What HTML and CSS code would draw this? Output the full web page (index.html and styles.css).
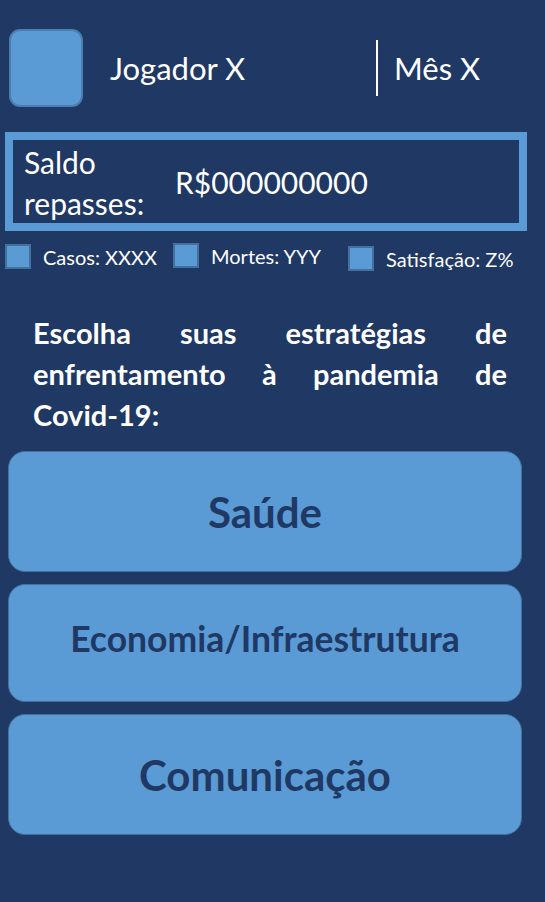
FILE: index.html
```html
<!DOCTYPE html>
<html lang="pt-BR">
<head>
    <meta charset="UTF-8">
    <meta name="viewport" content="width=device-width, initial-scale=1.0">
    <title>Jogo Covid-19</title>
    <link rel="stylesheet" href="styles.css">
</head>
<body>

<div class="screen">
    <div class="top">
        <div class="avatar"></div>
        <div class="player">Jogador X</div>
        <div class="divider"></div>
        <div class="month">Mês X</div>
    </div>

    <div class="balance">
        <div class="balance-label">Saldo<br>repasses:</div>
        <div class="balance-value">R$000000000</div>
    </div>

    <div class="stats">
        <div class="stat stat-casos"><span class="stat-box"></span>Casos: XXXX</div>
        <div class="stat stat-mortes"><span class="stat-box"></span>Mortes: YYY</div>
        <div class="stat stat-satisf"><span class="stat-box"></span>Satisfação: Z%</div>
    </div>

    <h1 class="question">Escolha suas estratégias de<br>enfrentamento à pandemia de<br>Covid-19:</h1>

    <div class="options">
        <button class="option">Saúde</button>
        <button class="option option-mid">Economia/Infraestrutura</button>
        <button class="option">Comunicação</button>
    </div>
</div>

</body>
</html>
```

FILE: styles.css
```css
body {
    margin: 0;
    background: #203864;
    color: #fff;
    font-family: 'Lato', 'Open Sans', sans-serif;
}
.screen {
    width: 545px;
    height: 902px;
    overflow: hidden;
}

/* header */
.top {
    display: flex;
    align-items: center;
    height: 78px;
    margin: 29px 0 0 9px;
}
.avatar {
    width: 70px;
    height: 74px;
    background: #5b9bd5;
    border: 2px solid #4a7db0;
    border-radius: 11px;
}
.player {
    margin-left: 27px;
    width: 266px;
    font-size: 31px;
}
.divider {
    width: 2px;
    height: 56px;
    background: #fff;
}
.month {
    margin-left: 16px;
    font-size: 31px;
}

/* saldo */
.balance {
    display: flex;
    align-items: center;
    margin: 25px 0 0 5px;
    width: 506px;
    height: 83px;
    border: 8px solid #5b9bd5;
}
.balance-label {
    width: 151px;
    padding-left: 11px;
    padding-top: 3px;
    font-size: 30px;
    line-height: 41px;
}
.balance-value {
    font-size: 30px;
}

/* indicadores */
.stats {
    display: grid;
    grid-template-columns: 168px 175px auto;
    align-items: start;
    margin: 13px 0 0 5px;
    font-size: 20px;
}
.stat {
    display: flex;
    align-items: center;
    gap: 12px;
}
.stat-box {
    width: 22px;
    height: 21px;
    background: #5b9bd5;
    border: 2px solid #41719c;
}
.stat-mortes {
    margin-top: -1px;
}
.stat-satisf {
    margin-top: 2px;
}

/* pergunta */
.question {
    margin: 41px 38px 0 33px;
    font-size: 29px;
    font-weight: 700;
    line-height: 41px;
    text-align: justify;
    text-align-last: justify;
}

/* botoes */
.options {
    display: flex;
    flex-direction: column;
    gap: 12px;
    margin: 16px 0 0 8px;
    width: 514px;
}
.option {
    height: 121px;
    background: #5b9bd5;
    border: 1.5px solid #41719c;
    border-radius: 17px;
    color: #203864;
    font-family: 'Lato', 'Open Sans', sans-serif;
    font-size: 42px;
    font-weight: 700;
    padding: 0;
}
.option-mid {
    height: 118px;
    font-size: 35.5px;
    padding-bottom: 10px;
}
```
